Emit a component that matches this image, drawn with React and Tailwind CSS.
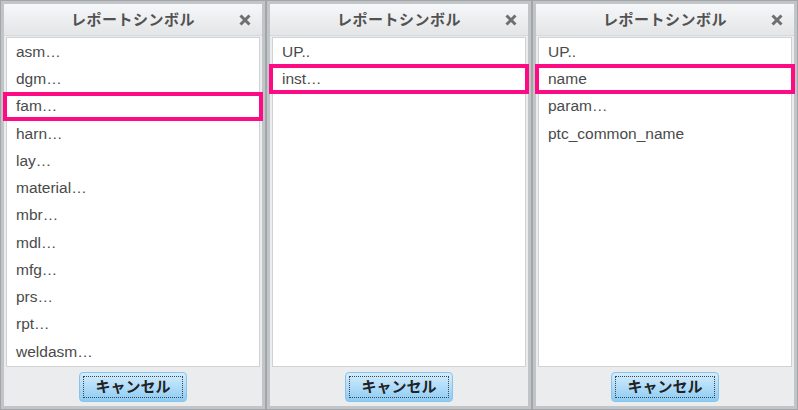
import React from "react";

const panels = [
  {
    items: ["asm…", "dgm…", "fam…", "harn…", "lay…", "material…", "mbr…", "mdl…", "mfg…", "prs…", "rpt…", "weldasm…"],
    selected: 2,
  },
  { items: ["UP..", "inst…"], selected: 1 },
  { items: ["UP..", "name", "param…", "ptc_common_name"], selected: 1 },
];

const Panel = ({ items, selected }) => {
  return (
    <div className="w-[266px] h-[410px] bg-[#a3a6a9] p-px">
      <div className="flex flex-col h-full border-[3px] border-[#c2c5c8] bg-[#eaecee]">
        {/* title bar */}
        <div className="relative h-[32px] flex items-center justify-center bg-gradient-to-b from-[#f6f7f8] to-[#e3e5e7] border-b border-[#d6d8da]">
          <span className="text-[15px] font-bold text-[#525252] leading-none tracking-[0.5px]">
            レポートシンボル
          </span>
          <svg className="absolute right-[11px] top-[10px]" width="12" height="12" viewBox="0 0 12 12">
            <path d="M1.5 1.5 L10.5 10.5 M10.5 1.5 L1.5 10.5" stroke="#6f6f6f" strokeWidth="3" />
          </svg>
        </div>

        {/* list */}
        <div className="relative mx-[2px] mt-[1px] h-[330px] bg-white border border-[#cfd1d3]">
          {items.map((item, i) => (
            <div key={i} className="relative h-[27.25px] flex items-center pl-[9px] text-[15.5px] text-[#4a4a4a] leading-none">
              {item}
              {i === selected && (
                <div className="absolute -left-[4px] -right-[4px] -top-[1px] -bottom-px border-[4px] border-[#fd0a85]"></div>
              )}
            </div>
          ))}
        </div>

        {/* footer */}
        <div className="flex-1 flex items-center justify-center">
          <button className="w-[108px] h-[30px] rounded-[4px] border border-[#86c4ee] bg-gradient-to-b from-[#d3edfd] to-[#8ccbf4] p-[3px]">
            <div className="h-full border border-dotted border-[#444] flex items-center justify-center text-[15px] font-bold text-[#222] leading-none">
              キャンセル
            </div>
          </button>
        </div>
      </div>
    </div>
  );
};

export default function App() {
  return (
    <div
      className="w-[798px] h-[410px] flex bg-[#b5b8bb] overflow-hidden"
      style={{ fontFamily: '"Liberation Sans", "Noto Sans CJK JP", sans-serif' }}
    >
      {panels.map((p, i) => (
        <Panel key={i} items={p.items} selected={p.selected} />
      ))}
    </div>
  );
}
